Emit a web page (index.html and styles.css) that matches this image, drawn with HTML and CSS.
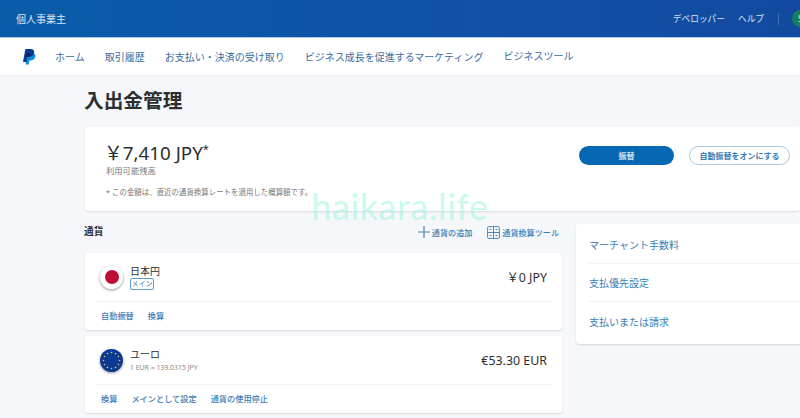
FILE: index.html
```html
<!DOCTYPE html>
<html lang="ja">
<head>
    <meta charset="UTF-8">
    <meta name="viewport" content="width=device-width, initial-scale=1.0">
    <title>入出金管理</title>
    <link rel="stylesheet" href="styles.css">
</head>
<body>
    <header class="topbar">
        <div class="account-type">個人事業主</div>
        <div class="top-links">
            <a>デベロッパー</a>
            <a>ヘルプ</a>
            <span class="top-sep"></span>
            <span class="avatar">S</span>
        </div>
    </header>

    <nav class="mainnav">
        <svg class="pp-logo" width="13" height="16" viewBox="0 0 13 16">
            <path fill="#0a8fd8" d="M3.6 4h5.600c2.200 0 3.600 1.300 3.200 3.600-.4 2.500-2.200 3.800-4.500 3.800H6.400l-.7 4.200H2.600z"/>
            <path fill="#0a3a94" d="M2.400 0h5.200c2.500 0 3.900 1.300 3.500 3.700-.4 2.700-2.400 4.300-5 4.300H4.300l-.8 5H0z"/>
            <path fill="#081f6b" d="M3.700 4.300h3.800c.9 2.400-1.100 3.700-3.300 3.700H3z"/>
        </svg>
        <a class="nav-home">ホーム</a>
        <a>取引履歴</a>
        <a>お支払い・決済の受け取り</a>
        <a>ビジネス成長を促進するマーケティング</a>
        <a class="nav-tools">ビジネスツール</a>
    </nav>

    <main class="page">
        <h1>入出金管理</h1>

        <section class="summary card">
            <div class="summary-top">
                <div>
                    <div class="balance"><span class="yen">￥</span>7,410 JPY<sup>*</sup></div>
                    <div class="balance-label">利用可能残高</div>
                </div>
                <div class="summary-buttons">
                    <button class="btn-primary">振替</button>
                    <button class="btn-outline">自動振替をオンにする</button>
                </div>
            </div>
            <p class="note">* この金額は、直近の通貨換算レートを適用した概算額です。</p>
        </section>

        <div class="columns">
            <div class="left-col">
                <div class="section-head">
                    <h2>通貨</h2>
                    <div class="tools">
                        <a class="tool">
                            <svg width="12" height="12" viewBox="0 0 12 12"><path d="M6 0v12M0 6h12" stroke="#4d88b8" stroke-width="1.2" fill="none"/></svg>
                            通貨の追加
                        </a>
                        <a class="tool">
                            <svg width="13" height="13" viewBox="0 0 13 13">
                                <rect x=".6" y=".6" width="11.8" height="11.8" rx="1.2" fill="none" stroke="#4d88b8" stroke-width="1"/>
                                <path d="M6.500 .6v11.800M.6 6.500h11.800" stroke="#4d88b8" stroke-width="1"/>
                                <path d="M2.500 3.500h2M8.500 3.500h2M2.500 9.500h2M8.500 9.500h2" stroke="#4d88b8" stroke-width="1"/>
                            </svg>
                            通貨換算ツール
                        </a>
                    </div>
                </div>

                <div class="currency card">
                    <div class="currency-main">
                        <span class="flag flag-jp"><span class="sun"></span></span>
                        <div class="currency-name">
                            <div class="name">日本円</div>
                            <span class="badge">メイン</span>
                        </div>
                        <div class="amount">￥0 JPY</div>
                    </div>
                    <div class="currency-actions">
                        <a>自動振替</a>
                        <a>換算</a>
                    </div>
                </div>

                <div class="currency card">
                    <div class="currency-main">
                        <span class="flag flag-eu">
                            <svg width="23" height="23" viewBox="0 0 23 23" fill="#e3c84a">
                                <circle cx="11.5" cy="3.5" r=".8"/><circle cx="15.5" cy="4.6" r=".8"/><circle cx="18.4" cy="7.5" r=".8"/>
                                <circle cx="19.5" cy="11.5" r=".8"/><circle cx="18.4" cy="15.5" r=".8"/><circle cx="15.5" cy="18.4" r=".8"/>
                                <circle cx="11.5" cy="19.5" r=".8"/><circle cx="7.5" cy="18.4" r=".8"/><circle cx="4.6" cy="15.5" r=".8"/>
                                <circle cx="3.5" cy="11.5" r=".8"/><circle cx="4.6" cy="7.5" r=".8"/><circle cx="7.5" cy="4.6" r=".8"/>
                            </svg>
                        </span>
                        <div class="currency-name">
                            <div class="name">ユーロ</div>
                            <div class="rate">1 EUR = 139.0315 JPY</div>
                        </div>
                        <div class="amount">€53.30 EUR</div>
                    </div>
                    <div class="currency-actions">
                        <a>換算</a>
                        <a>メインとして設定</a>
                        <a>通貨の使用停止</a>
                    </div>
                </div>
            </div>

            <aside class="side card">
                <a class="side-first">マーチャント手数料</a>
                <a class="side-second">支払優先設定</a>
                <a class="side-third">支払いまたは請求</a>
            </aside>
        </div>
    </main>

    <div class="watermark">haikara.life</div>
</body>
</html>
```

FILE: styles.css
```css
* {
    box-sizing: border-box;
}

html, body {
    height: 100%;
}

body {
    margin: 0;
    overflow: hidden;
    position: relative;
    background-color: #f5f7fa;
    color: #2c2e2f;
    font-family: "Noto Sans", "Noto Sans CJK JP", sans-serif;
}

a {
    color: #3a7db5;
}

.topbar {
    height: 38px;
    padding: 0 0 0 16px;
    display: flex;
    align-items: center;
    justify-content: space-between;
    background: linear-gradient(90deg, #0a5ca8, #134a9f);
    border-bottom: 1px solid #a9cdf0;
    color: #dbe7f5;
    font-size: 10px;
}

.top-links {
    display: flex;
    align-items: center;
    gap: 13px;
    margin-right: -9px;
}

.top-links a {
    color: #dbe7f5;
    font-size: 8.7px;
}

.top-sep {
    width: 1px;
    height: 12px;
    margin-left: 1px;
    background-color: #3e74b4;
}

.avatar {
    width: 17px;
    height: 17px;
    border-radius: 50%;
    background-color: #12805c;
    color: #dff3ea;
    font-size: 9px;
    line-height: 17px;
    text-align: center;
}

.mainnav {
    height: 37px;
    padding: 0 0 0 23px;
    display: flex;
    align-items: center;
    background-color: #fff;
    box-shadow: 0 1px 3px rgba(0, 0, 0, 0.06);
    font-size: 10px;
}

.mainnav a {
    margin-left: 20px;
    color: #3b6c9f;
}

.mainnav .nav-home {
    margin-left: 19px;
}

.mainnav .nav-tools {
    position: relative;
    top: -1px;
}

.pp-logo {
    flex-shrink: 0;
}

.page {
    padding-left: 85px;
}

h1 {
    margin: 0 0 0 -1px;
    height: 52px;
    line-height: 52px;
    font-size: 19.7px;
    font-weight: 700;
    color: #2c2e2f;
}

.card {
    background-color: #fff;
    border-radius: 3px;
    box-shadow: 0 1px 2px rgba(0, 0, 0, 0.12);
}

.summary {
    height: 84px;
    padding: 14px 10px 0 21px;
}

.summary-top {
    display: flex;
    justify-content: space-between;
    align-items: flex-start;
}

.balance {
    font-size: 18.8px;
    line-height: 24px;
    color: #2c2e2f;
}

.yen {
    margin-left: -2px;
}

.balance sup {
    font-size: 11px;
    line-height: 0;
}

.balance-label {
    margin-top: -1px;
    font-size: 8.3px;
    color: #777;
}

.summary-buttons {
    margin-top: 5px;
    display: flex;
    gap: 15px;
}

button {
    height: 19px;
    padding: 0;
    border-radius: 10px;
    font-family: inherit;
    font-size: 8px;
    font-weight: 700;
}

.btn-primary {
    width: 95px;
    border: none;
    background-color: #0668b3;
    color: #d5e6f4;
}

.btn-outline {
    width: 101px;
    border: 1px solid #a9c8e2;
    background-color: #fff;
    color: #3a7db5;
}

.note {
    margin: 10px 0 0;
    font-size: 7.45px;
    color: #777;
}

.columns {
    display: flex;
    gap: 14px;
    margin-top: 14px;
}

.left-col {
    width: 477px;
    flex-shrink: 0;
}

.section-head {
    height: 28px;
    display: flex;
    justify-content: space-between;
    align-items: flex-start;
}

h2 {
    margin: 0 0 0 -1px;
    font-size: 9.7px;
    line-height: 14px;
    font-weight: 700;
}

.tools {
    display: flex;
    gap: 15px;
    margin-right: 3px;
}

.tool {
    display: flex;
    align-items: center;
    gap: 2px;
    height: 14px;
    font-size: 8.1px;
    font-weight: 500;
}

.currency {
    height: 77px;
    margin-bottom: 6px;
    padding: 0 10px;
}

.currency-main {
    height: 49px;
    padding: 0 5px;
    display: flex;
    align-items: center;
    border-bottom: 1px solid #f1f2f4;
}

.flag {
    width: 23px;
    height: 23px;
    flex-shrink: 0;
    border-radius: 50%;
    display: flex;
    align-items: center;
    justify-content: center;
    box-shadow: 0 1px 3px rgba(0, 0, 0, 0.4);
}

.flag-jp {
    background-color: #fff;
}

.flag-jp .sun {
    width: 14px;
    height: 14px;
    border-radius: 50%;
    background-color: #bc0f33;
}

.flag-eu {
    background-color: #0a3a94;
}

.currency-name {
    margin-left: 7px;
    flex: 1;
}

.name {
    font-size: 10px;
    line-height: 14px;
    color: #2c2e2f;
}

.badge {
    display: block;
    width: 24px;
    height: 12px;
    border: 1px solid #5d9bc9;
    border-radius: 2px;
    color: #3a7db5;
    font-size: 7px;
    line-height: 10px;
    text-align: center;
}

.rate {
    margin-top: 1px;
    font-size: 6.9px;
    line-height: 11px;
    color: #888;
}

.amount {
    font-size: 12.4px;
    color: #2c2e2f;
}

.currency-actions {
    height: 27px;
    padding: 0 0 2px 6px;
    display: flex;
    align-items: center;
    gap: 14px;
    font-size: 8.2px;
    font-weight: 500;
}

.side {
    flex: 1;
    height: 120px;
    margin: -1px -20px 0 0;
    padding: 0 13px;
    display: flex;
    flex-direction: column;
    font-size: 10px;
}

.side a {
    border-bottom: 1px solid #f1f2f4;
}

.side .side-first {
    height: 40px;
    line-height: 42px;
}

.side .side-second {
    height: 38px;
    line-height: 39px;
}

.side .side-third {
    height: 42px;
    line-height: 40px;
    border-bottom: none;
}

.watermark {
    position: absolute;
    left: 0;
    right: 0;
    top: 184px;
    text-align: center;
    font-family: "Lato", sans-serif;
    font-size: 36px;
    line-height: 44px;
    letter-spacing: 0.6px;
    color: rgba(150, 245, 220, 0.5);
    pointer-events: none;
}
```
